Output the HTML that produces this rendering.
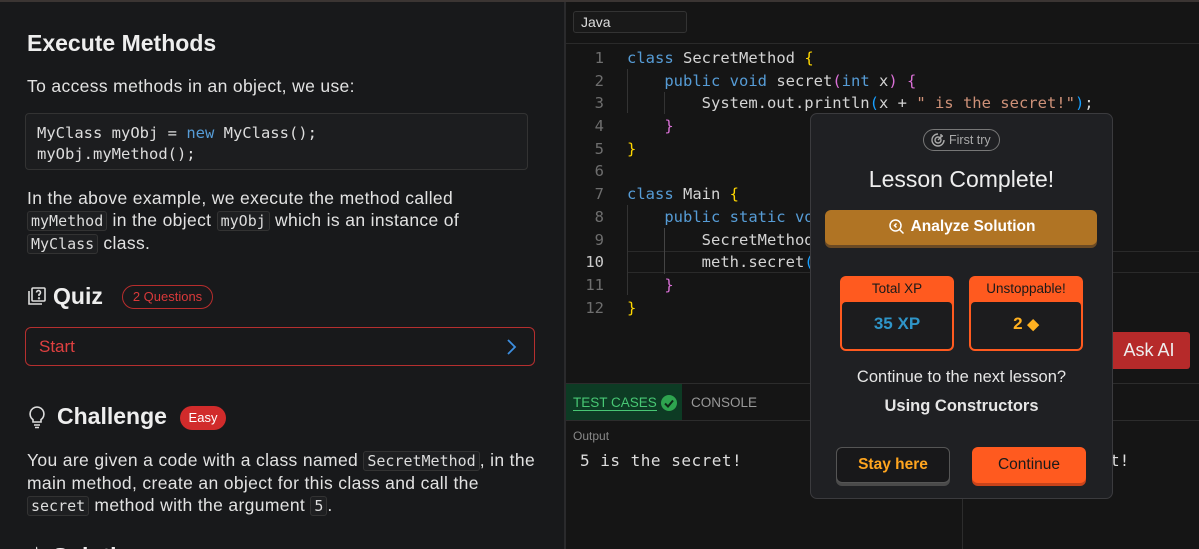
<!DOCTYPE html>
<html><head><meta charset="utf-8"><style>
*{box-sizing:border-box;margin:0;padding:0}
html,body{width:1199px;height:549px;overflow:hidden}
body{background:#18191b;font-family:"Liberation Sans",sans-serif;color:#e6e6e6;position:relative}
#w{position:absolute;left:0;top:0;width:1199px;height:549px;overflow:hidden}
.abs{position:absolute}
.mono{font-family:"DejaVu Sans Mono","Liberation Mono",monospace}
.ic{font-family:"DejaVu Sans Mono",monospace;font-size:15px;background:#1e1f21;border:1px solid #333;border-radius:3px;padding:0 3px;color:#ddd;letter-spacing:0}
.p{font-size:17.5px;line-height:22px;color:#e2e2e2;letter-spacing:.35px}
.ln{position:absolute;left:566px;width:38px;text-align:right;color:#6e6e6e;font-size:15.5px}
.cl{position:absolute;left:627px;font-size:15.5px;white-space:pre;color:#d4d4d4}
.k{color:#569cd6}.y{color:#ffd700}.m{color:#da70d6}.s{color:#ce9178}.b{color:#179fff}
</style></head><body><div id="w">
<div class="abs" style="left:0;top:0;width:1199px;height:2px;background:#3b3533"></div>
<div class="abs" style="left:0;top:2px;width:564px;height:547px;background:#18191b"></div>
<div class="abs" style="left:564px;top:2px;width:2px;height:547px;background:#2a2a2c"></div>
<div class="abs" style="left:27px;top:30px;font-size:23px;font-weight:bold;color:#eee">Execute Methods</div>
<div class="abs p" style="left:27px;top:75px">To access methods in an object, we use:</div>
<div class="abs mono" style="left:25px;top:113px;width:503px;height:57px;background:#1c1d1f;border:1px solid #333;border-radius:4px;padding:9px 11px;font-size:15.5px;line-height:21px;color:#ddd">MyClass myObj = <span class="k">new</span> MyClass();<br>myObj.myMethod();</div>
<div class="abs p" style="left:27px;top:187px;width:530px">In the above example, we execute the method called<br><span class="ic">myMethod</span> in the object <span class="ic">myObj</span> which is an instance of<br><span class="ic">MyClass</span> class.</div>
<svg class="abs" style="left:27px;top:286px" width="20" height="20" viewBox="0 0 20 20" fill="none" stroke="#ddd" stroke-width="1.6"><rect x="5" y="2" width="13" height="13" rx="1"/><path d="M2 5v13h13"/><path d="M9.5 6.5a2 2 0 1 1 2.5 2v1.5"/><circle cx="12" cy="12.3" r=".4" fill="#ddd"/></svg>
<div class="abs" style="left:53px;top:283px;font-size:23px;font-weight:bold;color:#eee">Quiz</div>
<div class="abs" style="left:122px;top:285px;width:91px;height:24px;border:1px solid #b72d2d;border-radius:12px;color:#d8393a;font-size:13px;text-align:center;line-height:22px">2 Questions</div>
<div class="abs" style="left:25px;top:327px;width:510px;height:39px;border:1px solid #b52f2f;border-radius:6px;color:#e04040;font-size:17px;line-height:37px;padding-left:13px">Start</div>
<svg class="abs" style="left:505px;top:338px" width="12" height="18" viewBox="0 0 12 18"><path d="M3 2l7 7-7 7" stroke="#3d8fe0" stroke-width="1.8" fill="none"/></svg>
<svg class="abs" style="left:27px;top:405px" width="20" height="24" viewBox="0 0 20 24" fill="none" stroke="#ddd" stroke-width="1.6"><path d="M10 2a7 7 0 0 0-4 12.7V17h8v-2.3A7 7 0 0 0 10 2z"/><path d="M7 20h6M8 22.5h4"/></svg>
<div class="abs" style="left:57px;top:403px;font-size:23px;font-weight:bold;color:#eee">Challenge</div>
<div class="abs" style="left:180px;top:406px;width:46px;height:24px;background:#d12b2b;border-radius:12px;color:#fff;font-size:13px;text-align:center;line-height:24px">Easy</div>
<div class="abs p" style="left:27px;top:449px;width:537px">You are given a code with a class named <span class="ic">SecretMethod</span>, in the<br>main method, create an object for this class and call the<br><span class="ic">secret</span> method with the argument <span class="ic">5</span>.</div>
<div class="abs" style="left:27px;top:542px;font-size:23px;font-weight:bold;color:#eee;line-height:28px">✦ Solution</div>

<div class="abs" style="left:566px;top:2px;width:633px;height:547px;background:#151515"></div>
<div class="abs" style="left:573px;top:11px;width:114px;height:22px;border:1px solid #333;border-radius:3px;background:#191919;font-size:14px;color:#ddd;padding:2px 7px">Java</div>
<div class="abs" style="left:566px;top:43px;width:633px;height:1px;background:#2a2a2a"></div>
<div class="abs" style="left:627px;top:251px;width:572px;height:22px;border-top:1px solid #2a2a2a;border-bottom:1px solid #2a2a2a"></div>
<div class="abs" style="left:627px;top:69px;width:1px;height:44px;background:#333"></div>
<div class="abs" style="left:664px;top:92px;width:1px;height:22px;background:#333"></div>
<div class="abs" style="left:627px;top:205px;width:1px;height:90px;background:#333"></div>
<div class="abs" style="left:664px;top:228px;width:1px;height:46px;background:#444"></div>
<div class="mono">
<div class="ln" style="top:49px">1</div><div class="ln" style="top:72px">2</div><div class="ln" style="top:94px">3</div><div class="ln" style="top:117px">4</div><div class="ln" style="top:140px">5</div><div class="ln" style="top:162px">6</div><div class="ln" style="top:185px">7</div><div class="ln" style="top:208px">8</div><div class="ln" style="top:231px">9</div><div class="ln" style="top:253px;color:#ccc">10</div><div class="ln" style="top:276px">11</div><div class="ln" style="top:299px">12</div>
<div class="cl" style="top:49px"><span class="k">class</span> SecretMethod <span class="y">{</span></div>
<div class="cl" style="top:72px">    <span class="k">public void</span> secret<span class="m">(</span><span class="k">int</span> x<span class="m">)</span> <span class="m">{</span></div>
<div class="cl" style="top:94px">        System.out.println<span class="b">(</span>x + <span class="s">" is the secret!"</span><span class="b">)</span>;</div>
<div class="cl" style="top:117px">    <span class="m">}</span></div>
<div class="cl" style="top:140px"><span class="y">}</span></div>
<div class="cl" style="top:185px"><span class="k">class</span> Main <span class="y">{</span></div>
<div class="cl" style="top:208px">    <span class="k">public static void</span></div>
<div class="cl" style="top:231px">        SecretMethod</div>
<div class="cl" style="top:253px">        meth.secret<span class="b">(</span></div>
<div class="cl" style="top:276px">    <span class="m">}</span></div>
<div class="cl" style="top:299px"><span class="y">}</span></div>
</div>
<div class="abs" style="left:1108px;top:332px;width:82px;height:37px;background:#b62a2a;border-radius:3px;color:#eee;font-size:18px;text-align:center;line-height:37px">Ask AI</div>
<div class="abs" style="left:566px;top:383px;width:633px;height:1px;background:#2c2c2c"></div>
<div class="abs" style="left:566px;top:384px;width:116px;height:36px;background:#0d3b24"></div>
<div class="abs" style="left:573px;top:395px;font-size:13.5px;color:#48c774;border-bottom:1px solid #48c774;line-height:15px">TEST CASES</div>
<div class="abs" style="left:661px;top:395px;width:16px;height:16px;border-radius:50%;background:#2ea44f"></div>
<svg class="abs" style="left:661px;top:395px" width="16" height="16"><path d="M4 8.5l3 3 5-6" stroke="#0d2a18" stroke-width="2" fill="none"/></svg>
<div class="abs" style="left:691px;top:395px;font-size:13.5px;color:#999">CONSOLE</div>
<div class="abs" style="left:566px;top:420px;width:633px;height:1px;background:#2c2c2c"></div>
<div class="abs" style="left:962px;top:421px;width:1px;height:128px;background:#2c2c2c"></div>
<div class="abs" style="left:573px;top:429px;font-size:12px;color:#888">Output</div>
<div class="abs mono" style="left:580px;top:451px;font-size:16px;color:#ddd;letter-spacing:.5px">5 is the secret!</div>
<div class="abs mono" style="left:1110px;top:451px;font-size:16px;color:#ddd">t!</div>

<div class="abs" style="left:810px;top:113px;width:303px;height:386px;background:#1f2023;border:1px solid #3b3b3e;border-radius:7px"></div>
<div class="abs" style="left:923px;top:129px;width:77px;height:22px;border:1px solid #777;border-radius:11px;font-size:12.5px;color:#aaa;line-height:20px;padding-left:25px">First try</div>
<svg class="abs" style="left:930px;top:132px" width="16" height="16" viewBox="0 0 16 16" fill="none" stroke="#aaa" stroke-width="1.4"><path d="M8 2a6 6 0 1 0 6 6"/><circle cx="8" cy="8" r="3"/><path d="M8 8l4-4M11 2v2h2"/></svg>
<div class="abs" style="left:810px;top:166px;width:303px;text-align:center;font-size:23px;color:#eee">Lesson Complete!</div>
<div class="abs" style="left:825px;top:210px;width:272px;height:35px;background:#b07424;border-radius:6px;box-shadow:0 3px 0 #6b4a24;color:#fff;font-weight:bold;font-size:15.5px;line-height:33px;text-align:center"><span style="display:inline-block;width:24px"></span>Analyze Solution</div>
<svg class="abs" style="left:888px;top:218px" width="17" height="17" viewBox="0 0 17 17" fill="none" stroke="#fff" stroke-width="1.5"><circle cx="7.5" cy="7.5" r="5.5"/><path d="M11.5 11.5l4 4M8.5 5.5l-2 2 2 2"/></svg>
<div class="abs" style="left:840px;top:276px;width:114px;height:75px;background:#ff5a1f;border-radius:6px"></div>
<div class="abs" style="left:842px;top:302px;width:110px;height:47px;background:#1c1c1e;border-radius:4px"></div>
<div class="abs" style="left:840px;top:281px;width:114px;text-align:center;font-size:13.5px;color:#1a1a1a">Total XP</div>
<div class="abs" style="left:842px;top:314px;width:110px;text-align:center;font-size:17px;color:#2f95c8;font-weight:bold">35 XP</div>
<div class="abs" style="left:969px;top:276px;width:114px;height:75px;background:#ff5a1f;border-radius:6px"></div>
<div class="abs" style="left:971px;top:302px;width:110px;height:47px;background:#1c1c1e;border-radius:4px"></div>
<div class="abs" style="left:969px;top:281px;width:114px;text-align:center;font-size:13.5px;color:#1a1a1a">Unstoppable!</div>
<div class="abs" style="left:971px;top:314px;width:110px;text-align:center;font-size:17px;color:#ffb020;font-weight:bold">2 <span style="font-size:15px">◆</span></div>
<div class="abs" style="left:810px;top:368px;width:303px;text-align:center;font-size:16.5px;color:#e6e6e6">Continue to the next lesson?</div>
<div class="abs" style="left:810px;top:397px;width:303px;text-align:center;font-size:16.5px;font-weight:bold;color:#e6e6e6">Using Constructors</div>
<div class="abs" style="left:836px;top:447px;width:114px;height:36px;background:#18181a;border:1px solid #555;border-radius:6px;box-shadow:0 3px 0 #4a4a4a;color:#ffa51f;font-weight:bold;font-size:15.5px;text-align:center;line-height:34px">Stay here</div>
<div class="abs" style="left:972px;top:447px;width:114px;height:36px;background:#ff5a1f;border-radius:6px;box-shadow:0 3px 0 #c9431a;color:#1a1a1a;font-size:15.5px;text-align:center;line-height:36px">Continue</div>
</div></body></html>
